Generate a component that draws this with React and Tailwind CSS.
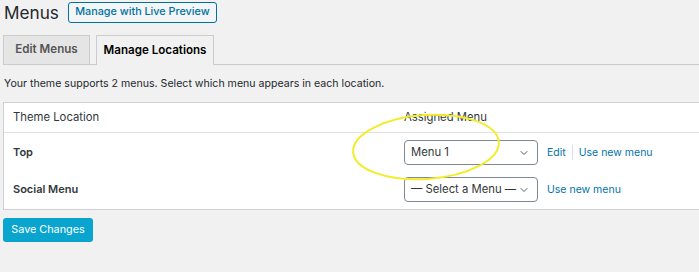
import { ChevronDown } from 'lucide-react';

function Select({ label }) {
  return (
    <div className="w-[134px] h-[25px] border border-[#7e8993] rounded-[4px] bg-white flex items-center justify-between pl-[6px] pr-[7px] text-[11.3px] text-[#32373c]">
      <span className="whitespace-nowrap">{label}</span>
      <ChevronDown className="w-[12px] h-[12px] text-[#555d66] shrink-0" strokeWidth={2} />
    </div>
  );
}

export default function App() {
  return (
    <div
      className="relative w-[699px] h-[272px] overflow-hidden bg-[#f1f1f1] text-[#23282d]"
      style={{ fontFamily: 'Inter, "Liberation Sans", sans-serif' }}
    >
      {/* Heading */}
      <div className="flex items-center pl-[4px] pt-[2px] h-[23px]">
        <h1 className="text-[17.2px] leading-none font-normal text-[#23282d]">Menus</h1>
        <button className="ml-[9px] h-[21px] w-[149px] border border-[#0071a1] rounded-[3px] bg-[#f3f5f6] text-[#0071a1] text-[10.8px] font-medium leading-none whitespace-nowrap">
          Manage with Live Preview
        </button>
      </div>

      {/* Tabs */}
      <div className="mt-[12px] ml-[3px] flex items-end gap-[6px] border-b border-[#ccc] h-[30px]">
        <div className="w-[87px] h-[29px] bg-[#e5e5e5] border border-[#ccc] border-b-0 flex items-center justify-center text-[11.6px] font-semibold text-[#555]">
          Edit Menus
        </div>
        <div className="w-[118px] h-[30px] -mb-px bg-[#f1f1f1] border border-[#ccc] border-b-0 flex items-center justify-center text-[11.6px] font-semibold text-[#000] whitespace-nowrap">
          Manage Locations
        </div>
      </div>

      {/* Description */}
      <p className="mt-[12px] ml-[4px] text-[10.6px] leading-[14px] text-[#23282d] whitespace-nowrap">
        Your theme supports 2 menus. Select which menu appears in each location.
      </p>

      {/* Table */}
      <div className="mt-[11px] ml-[3px] w-[720px] bg-white border border-[#ccd0d4] text-[11px]">
        <div className="flex items-center h-[30px] border-b border-[#e1e1e1]">
          <div className="w-[400px] pl-[9px] text-[11.3px] text-[#32373c]">Theme Location</div>
          <div className="text-[11.3px] text-[#32373c]">Assigned Menu</div>
        </div>
        <div className="flex items-center h-[38px] pt-[1px]">
          <div className="w-[400px] pl-[9px] font-semibold text-[#32373c]">Top</div>
          <Select label="Menu 1" />
          <div className="ml-[9px] flex items-center text-[#0073aa] text-[10.5px]">
            <span>Edit</span>
            <span className="mx-[6px] w-px h-[15px] bg-[#ddd]" />
            <span>Use new menu</span>
          </div>
        </div>
        <div className="flex items-center h-[38px] pb-[1px]">
          <div className="w-[400px] pl-[9px] font-semibold text-[#32373c]">Social Menu</div>
          <Select label="— Select a Menu —" />
          <span className="ml-[9px] text-[#0073aa] text-[10.5px]">Use new menu</span>
        </div>
      </div>

      {/* Save */}
      <button className="block mt-[8px] ml-[3px] w-[90px] h-[24px] rounded-[3px] bg-[#0aa5cf] text-white text-[10.8px] leading-none">
        Save Changes
      </button>

      {/* Annotation */}
      <svg className="absolute left-0 top-0 pointer-events-none" width="699" height="272">
        <ellipse
          cx="426"
          cy="147"
          rx="73"
          ry="32"
          fill="none"
          stroke="#f3ec2b"
          strokeWidth="2"
          transform="rotate(-4 426 147)"
        />
      </svg>
    </div>
  );
}
